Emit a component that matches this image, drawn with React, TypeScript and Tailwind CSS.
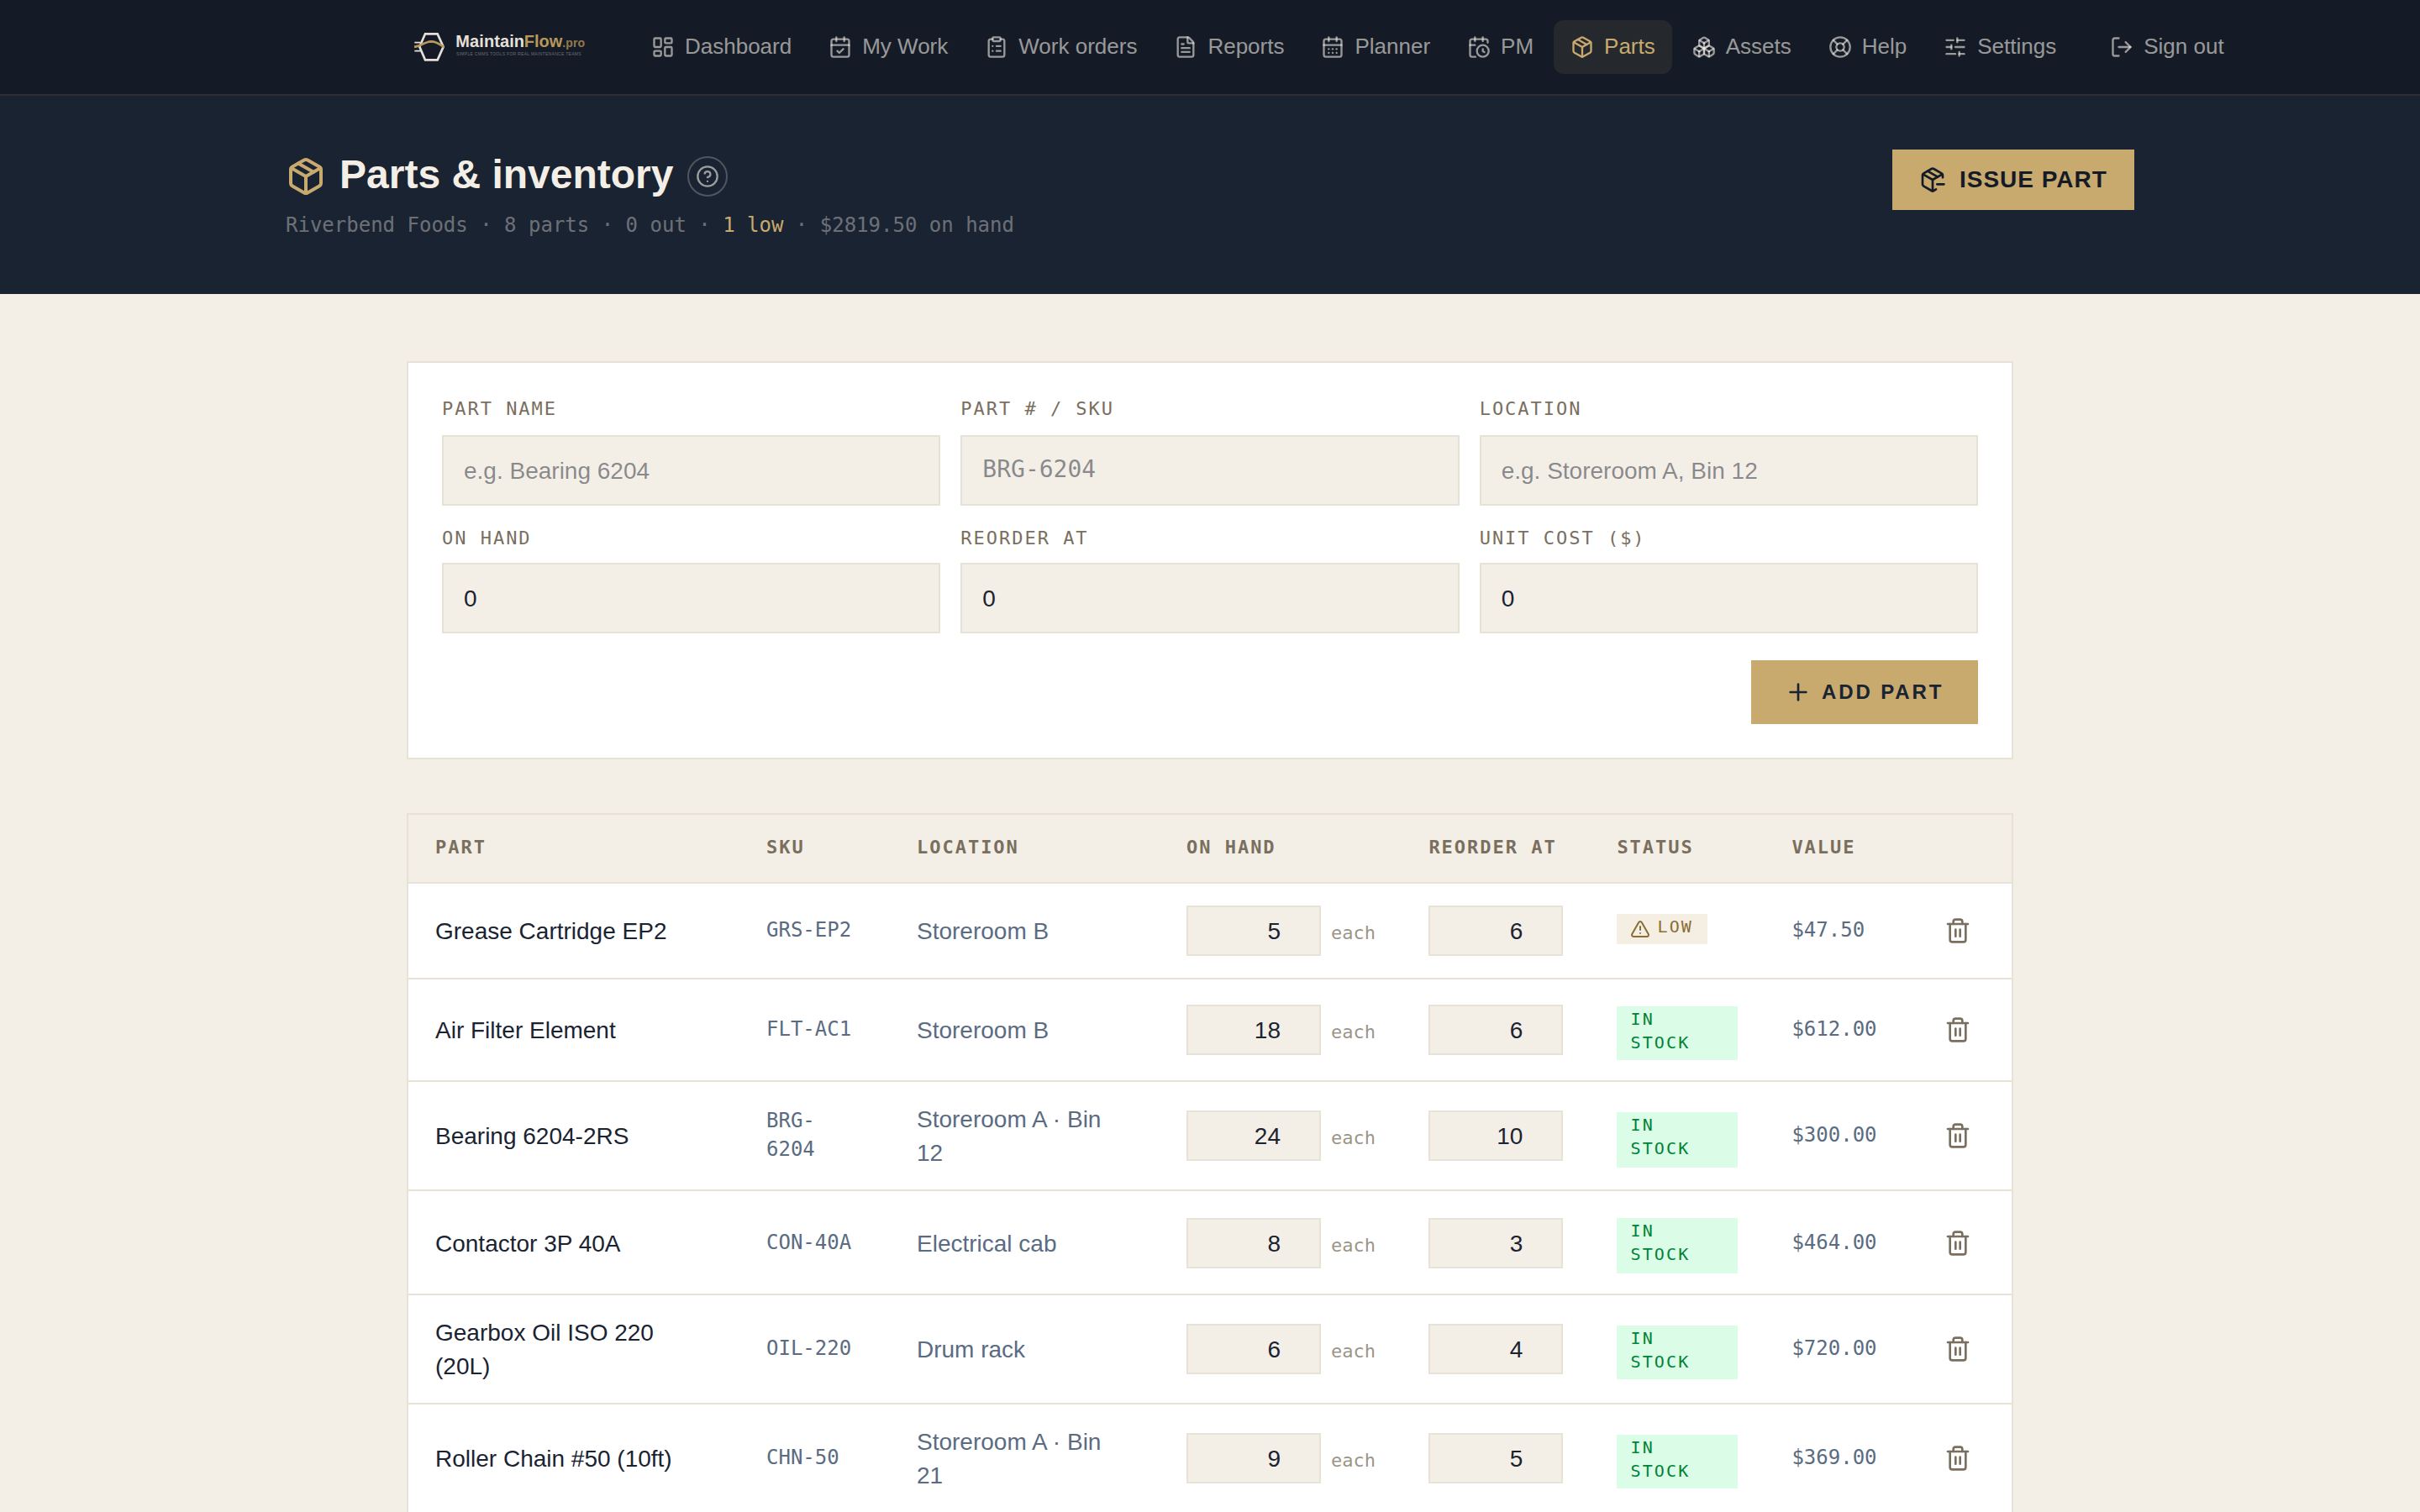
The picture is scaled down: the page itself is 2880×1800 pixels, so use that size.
import React from 'react';
import {
    Boxes,
    CalendarCheck,
    CalendarClock,
    CalendarDays,
    CircleHelp,
    ClipboardList,
    FileText,
    LayoutDashboard,
    LifeBuoy,
    LogOut,
    LucideIcon,
    Package,
    PackageMinus,
    Plus,
    SlidersHorizontal,
    Trash2,
    TriangleAlert,
} from 'lucide-react';

interface NavItem {
    label: string;
    icon: LucideIcon;
    active?: boolean;
}

interface Part {
    name: string;
    sku: string;
    location: string;
    onHand: number;
    reorderAt: number;
    value: string;
    low?: boolean;
    rowClass: string;
    badgeClass: string;
}

interface Field {
    label: string;
    placeholder?: string;
    value?: string;
    mono?: boolean;
}

const NAV: NavItem[] = [
    { label: 'Dashboard', icon: LayoutDashboard },
    { label: 'My Work', icon: CalendarCheck },
    { label: 'Work orders', icon: ClipboardList },
    { label: 'Reports', icon: FileText },
    { label: 'Planner', icon: CalendarDays },
    { label: 'PM', icon: CalendarClock },
    { label: 'Parts', icon: Package, active: true },
    { label: 'Assets', icon: Boxes },
    { label: 'Help', icon: LifeBuoy },
    { label: 'Settings', icon: SlidersHorizontal },
];

const TEXT_FIELDS: Field[] = [
    { label: 'Part name', placeholder: 'e.g. Bearing 6204' },
    { label: 'Part # / SKU', placeholder: 'BRG-6204', mono: true },
    { label: 'Location', placeholder: 'e.g. Storeroom A, Bin 12' },
];

const NUMBER_FIELDS: Field[] = [
    { label: 'On hand', value: '0' },
    { label: 'Reorder at', value: '0' },
    { label: 'Unit cost ($)', value: '0' },
];

const PARTS: Part[] = [
    { name: 'Grease Cartridge EP2', sku: 'GRS-EP2', location: 'Storeroom B', onHand: 5, reorderAt: 6, value: '$47.50', low: true, rowClass: 'h-[114px]', badgeClass: 'mt-[36px] h-[36px]' },
    { name: 'Air Filter Element', sku: 'FLT-AC1', location: 'Storeroom B', onHand: 18, reorderAt: 6, value: '$612.00', rowClass: 'h-[122px]', badgeClass: 'mt-[32px] h-[64px]' },
    { name: 'Bearing 6204-2RS', sku: 'BRG-6204', location: 'Storeroom A · Bin 12', onHand: 24, reorderAt: 10, value: '$300.00', rowClass: 'h-[130px]', badgeClass: 'mt-[36px] h-[66px]' },
    { name: 'Contactor 3P 40A', sku: 'CON-40A', location: 'Electrical cab', onHand: 8, reorderAt: 3, value: '$464.00', rowClass: 'h-[124px] pt-0.5', badgeClass: 'mt-[30px] h-[66px]' },
    { name: 'Gearbox Oil ISO 220 (20L)', sku: 'OIL-220', location: 'Drum rack', onHand: 6, reorderAt: 4, value: '$720.00', rowClass: 'h-[130px]', badgeClass: 'mt-[36px] h-[64px]' },
    { name: 'Roller Chain #50 (10ft)', sku: 'CHN-50', location: 'Storeroom A · Bin 21', onHand: 9, reorderAt: 5, value: '$369.00', rowClass: 'h-[130px]', badgeClass: 'mt-[36px] h-[64px]' },
];

const MONO = "font-['DejaVu_Sans_Mono',monospace]";
const COLUMNS = 'grid grid-cols-[394px_179px_321px_288.4px_224px_208px_181.6px_1fr]';

const Logo = () => (
    <svg width="230" height="54" viewBox="0 0 690 162" fill="none" className="shrink-0">
        <path d="M66 34H110L131 80L110 127H66L46 80Z" stroke="#e4e0d9" strokeWidth="8" />
        <path d="M28 65H48M28 95H50" stroke="#e4e0d9" strokeWidth="5" />
        <path d="M27 80C48 80 62 62 87 61C108 61 118 72 133 81" stroke="#b8975a" strokeWidth="8" />
        <text x="175" y="82" fontFamily="Liberation Sans, sans-serif" fontWeight="700" fontSize="60" textLength="245" fill="#e4e0d9">Maintain</text>
        <text x="419" y="82" fontFamily="Liberation Sans, sans-serif" fontWeight="700" fontSize="60" textLength="137" fill="#b8975a">Flow</text>
        <text x="556" y="82" fontFamily="Liberation Sans, sans-serif" fontWeight="700" fontSize="42" textLength="80" fill="#92794c">.pro</text>
        <text x="177" y="110" fontFamily="Liberation Sans, sans-serif" fontSize="15" textLength="446" fill="#6b6c6d">SIMPLE CMMS TOOLS FOR REAL MAINTENANCE TEAMS</text>
    </svg>
);

const NavLink = ({ label, icon: Icon, active }: NavItem) => (
    <a
        className={`flex h-16 shrink-0 items-center gap-3 rounded-xl px-5 text-[26px] whitespace-nowrap ${
            active ? 'bg-[#c8a96e]/10 text-[#c8a96e]' : 'text-[#f4efe6]/60'
        }`}
    >
        <Icon size={28} />
        <span className="pb-0.5">{label}</span>
    </a>
);

const FormField = ({ label, placeholder, value, mono }: Field) => (
    <label className="block">
        <span className={`block h-7 text-[22px] leading-[30px] tracking-[0.09em] text-[#7a6f5f] uppercase ${MONO}`}>{label}</span>
        <input
            className={`block h-[84px] w-full border-2 border-[#e8e2d6] bg-[#f4efe6] px-6 text-[28px] text-[#1a2332] ${
                placeholder ? 'mt-[18px]' : 'mt-4'
            } ${mono ? `pb-1 ${MONO}` : 'pt-0.5'}`}
            placeholder={placeholder}
            defaultValue={value}
        />
    </label>
);

const QtyInput = ({ value }: { value: number }) => (
    <input
        className="h-[60px] w-[160px] border-2 border-[#e8e2d6] bg-[#f4efe6] pt-0.5 pr-[46px] text-right text-[28px] text-[#1a2332]"
        defaultValue={value}
    />
);

const StatusBadge = ({ low, badgeClass }: { low?: boolean; badgeClass: string }) => (
    <div
        className={`flex gap-2 self-start px-4 text-[20px] leading-7 tracking-[0.11em] uppercase ${MONO} ${badgeClass} ${
            low ? 'w-[108px] bg-[#f5eee2] text-[#8a6d35]' : 'w-[144px] bg-green-100 pt-px text-green-700'
        }`}
    >
        {low && <TriangleAlert size={24} className="mt-1.5 shrink-0" />}
        {low ? <span className="mt-px">Low</span> : 'In stock'}
    </div>
);

const PartRow = ({ part }: { part: Part }) => (
    <div className={`${COLUMNS} ${part.rowClass} items-center border-b-2 border-[#e8e2d6] text-[28px] leading-10 text-[#5a6b82]`}>
        <div className="px-8 pt-0.5 text-[#1a2332]">{part.name}</div>
        <div className={`px-8 pb-[3px] text-[24px] leading-[34px] ${MONO}`}>{part.sku}</div>
        <div className="pt-0.5 pr-16 pl-8">{part.location}</div>
        <div className="flex items-baseline gap-3 px-8">
            <QtyInput value={part.onHand} />
            <span className={`text-[22px] text-[#7a6f5f]/75 ${MONO}`}>each</span>
        </div>
        <div className="px-8">
            <QtyInput value={part.reorderAt} />
        </div>
        <div className="flex self-start px-8">
            <StatusBadge low={part.low} badgeClass={part.badgeClass} />
        </div>
        <div className={`px-8 pb-[3px] text-[24px] leading-[34px] ${MONO}`}>{part.value}</div>
        <div className="px-8">
            <Trash2 size={32} className="text-[#7a6f5f]" />
        </div>
    </div>
);

const App = () => {
    return (
        <div className="h-[1800px] w-[2880px] overflow-hidden bg-[#f4efe6] font-['Liberation_Sans',Arial,sans-serif]">
            <header className="flex h-[114px] items-center border-b-2 border-[#2f2f33] bg-[#141b27] pl-[484px]">
                <Logo />
                <nav className="ml-[41px] flex items-center gap-1">
                    {NAV.map((item) => (
                        <NavLink key={item.label} {...item} />
                    ))}
                    <div className="ml-5">
                        <NavLink label="Sign out" icon={LogOut} />
                    </div>
                </nav>
            </header>

            <section className="h-[236px] bg-[#1a2332] pt-16">
                <div className="mx-auto flex w-[2200px] items-start justify-between">
                    <div>
                        <div className="flex h-16 items-center gap-4">
                            <Package size={48} className="text-[#c8a96e]" />
                            <h1 className="pb-[5px] text-[48px] leading-[56px] font-bold text-[#f4efe6]">Parts &amp; inventory</h1>
                            <span className="ml-px flex size-12 items-center justify-center rounded-full border-2 border-[#f4efe6]/25 text-[#f4efe6]/60">
                                <CircleHelp size={28} />
                            </span>
                        </div>
                        <p className={`mt-2 text-[24px] leading-9 text-[#f4efe6]/40 ${MONO}`}>
                            Riverbend Foods · 8 parts · 0 out · <span className="text-[#c8a96e]">1 low</span> · $2819.50 on hand
                        </p>
                    </div>
                    <button className="flex h-[72px] w-[288px] items-center gap-4 bg-[#c8a96e] pl-8 text-[28px] font-bold tracking-[0.035em] whitespace-nowrap text-[#141b27] uppercase">
                        <PackageMinus size={32} />
                        Issue part
                    </button>
                </div>
            </section>

            <main className="mx-auto w-[1912px] pt-20">
                <form className="flex flex-col border-2 border-[#e8e2d6] bg-white p-10">
                    <div className="grid grid-cols-3 gap-6">
                        {[...TEXT_FIELDS, ...NUMBER_FIELDS].map((field) => (
                            <FormField key={field.label} {...field} />
                        ))}
                    </div>
                    <button
                        type="button"
                        className="mt-8 flex h-[76px] w-[270px] items-center gap-3 self-end bg-[#c8a96e] pl-10 text-[24px] font-bold tracking-[0.12em] whitespace-nowrap text-[#1a2332] uppercase"
                    >
                        <Plus size={32} />
                        Add part
                    </button>
                </form>

                <div className="mt-16 border-2 border-[#e8e2d6] bg-white">
                    <div
                        className={`${COLUMNS} h-[82px] items-center border-b-2 border-[#e8e2d6] bg-[#f4efe6] pb-1 text-[22px] font-bold tracking-[0.09em] whitespace-nowrap text-[#7a6f5f] uppercase ${MONO}`}
                    >
                        <div className="pl-8">Part</div>
                        <div className="pl-8">SKU</div>
                        <div className="pl-8">Location</div>
                        <div className="pl-8">On hand</div>
                        <div className="pl-8">Reorder at</div>
                        <div className="pl-8">Status</div>
                        <div className="pl-8">Value</div>
                        <div />
                    </div>
                    {PARTS.map((part) => (
                        <PartRow key={part.sku} part={part} />
                    ))}
                </div>
            </main>
        </div>
    );
};

export default App;
